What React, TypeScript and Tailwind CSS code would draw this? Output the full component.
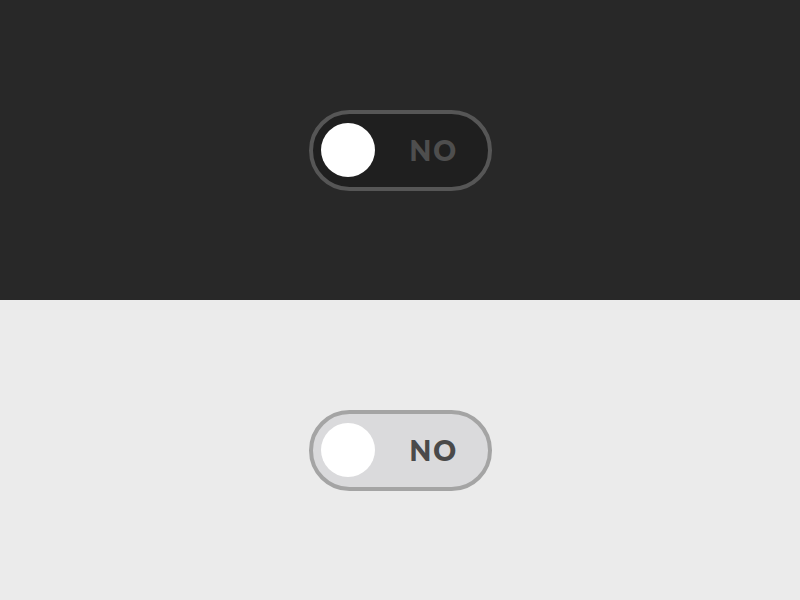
import React from 'react';

type ToggleProps = {
  dark?: boolean;
};

const Toggle: React.FC<ToggleProps> = ({ dark }) => {
  return (
    <div
      className={
        dark
          ? 'flex h-[81px] w-[183px] items-center rounded-full border-4 border-[#565656] bg-[#1f1f1f] pl-2'
          : 'flex h-[81px] w-[183px] items-center rounded-full border-4 border-[#a4a4a4] bg-[#dadadc] pl-2'
      }
    >
      <div className="h-[54px] w-[54px] shrink-0 rounded-full bg-white" />
      <span
        className={
          dark
            ? 'ml-[35px] text-[28px] font-extrabold leading-none tracking-[2px] text-[#4e4e4e]'
            : 'ml-[35px] text-[28px] font-extrabold leading-none tracking-[2px] text-[#4a4a4a]'
        }
        style={{ fontFamily: 'Lato, "Open Sans", sans-serif' }}
      >
        NO
      </span>
    </div>
  );
};

export default function App() {
  return (
    <div className="flex h-[600px] w-[800px] flex-col">
      <div className="flex h-[300px] items-center justify-center bg-[#282828]">
        <Toggle dark />
      </div>
      <div className="flex h-[300px] items-center justify-center bg-[#ebebeb]">
        <Toggle />
      </div>
    </div>
  );
}
